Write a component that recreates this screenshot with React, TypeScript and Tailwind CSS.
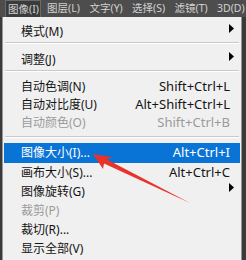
import React from "react";

type Item =
  | { kind: "sep"; h: number; line: number }
  | {
      kind: "item";
      label: string;
      shortcut?: string;
      arrow?: boolean;
      disabled?: boolean;
      active?: boolean;
      h: number;
    };

const items: Item[] = [
  { kind: "item", label: "模式(M)", arrow: true, h: 18 },
  { kind: "sep", h: 10, line: 1 },
  { kind: "item", label: "调整(J)", arrow: true, h: 18 },
  { kind: "sep", h: 9, line: 1 },
  { kind: "item", label: "自动色调(N)", shortcut: "Shift+Ctrl+L", h: 18 },
  { kind: "item", label: "自动对比度(U)", shortcut: "Alt+Shift+Ctrl+L", h: 18 },
  { kind: "item", label: "自动颜色(O)", shortcut: "Shift+Ctrl+B", disabled: true, h: 18 },
  { kind: "sep", h: 11, line: 4 },
  { kind: "item", label: "图像大小(I)...", shortcut: "Alt+Ctrl+I", active: true, h: 20 },
  { kind: "item", label: "画布大小(S)...", shortcut: "Alt+Ctrl+C", h: 19 },
  { kind: "item", label: "图像旋转(G)", arrow: true, h: 19 },
  { kind: "item", label: "裁剪(P)", disabled: true, h: 19 },
  { kind: "item", label: "裁切(R)...", h: 19 },
  { kind: "item", label: "显示全部(V)", h: 19 },
];

const menus = ["图像(I)", "图层(L)", "文字(Y)", "选择(S)", "滤镜(T)", "3D(D)"];

export default function App() {
  return (
    <div
      className="relative w-[246px] h-[260px] overflow-hidden bg-[#3a3a3a]"
      style={{ fontFamily: '"Noto Sans", "Noto Sans CJK SC", sans-serif' }}
    >
      {/* menu bar */}
      <div className="flex h-[17px] bg-[#4d4d4d] pl-[5px] text-[10.5px] leading-[17px] text-[#d2d2d2] whitespace-nowrap">
        {menus.map((m, i) =>
          i === 0 ? (
            <div
              key={m}
              className="w-[36px] shrink-0 pl-[2px] bg-[#3b3b3b] border border-[#6a6a6a] border-b-0 leading-[16px]"
            >
              {m}
            </div>
          ) : (
            <div key={m} className="w-[42.5px] shrink-0 pl-[6px]">
              {m}
            </div>
          )
        )}
      </div>
      {/* dropdown */}
      <div className="flex">
        <div className="w-[2px] shrink-0 bg-[#3a3a3a]" />
        <div className="w-[240px] shrink-0 bg-[#f0f0f0] border border-t-0 border-[#979797] pt-[6px] pl-px pr-[1px] h-[260px]">
          {items.map((it, i) =>
            it.kind === "sep" ? (
              <div key={i} className="px-px" style={{ height: it.h, paddingTop: it.line }}>
                <div className="border-t border-[#c9c9c9] border-b border-b-white" />
              </div>
            ) : (
              <div
                key={i}
                className={
                  "relative flex items-center justify-between pl-[17px] pr-[10px] text-[12px] whitespace-nowrap " +
                  (it.active
                    ? "bg-[#0a74d6] text-white"
                    : it.disabled
                    ? "text-[#9b9b9b]"
                    : "text-[#141414]")
                }
                style={{ height: it.h }}
              >
                <span>{it.label}</span>
                {it.shortcut && <span className="text-[13px]">{it.shortcut}</span>}
                {it.arrow && (
                  <svg
                    className="absolute right-[6px] top-[1px]"
                    width="5"
                    height="9"
                    viewBox="0 0 5 9"
                  >
                    <polygon points="0,0 5,4.5 0,9" fill="#000" />
                  </svg>
                )}
              </div>
            )
          )}
        </div>
      </div>
      {/* red arrow annotation */}
      <svg className="absolute left-0 top-0" width="246" height="260" viewBox="0 0 246 260">
        <polygon
          points="93,154 112,157 107,159.5 190,203 104,163.5 103,169"
          fill="#e8322c"
        />
      </svg>
    </div>
  );
}
